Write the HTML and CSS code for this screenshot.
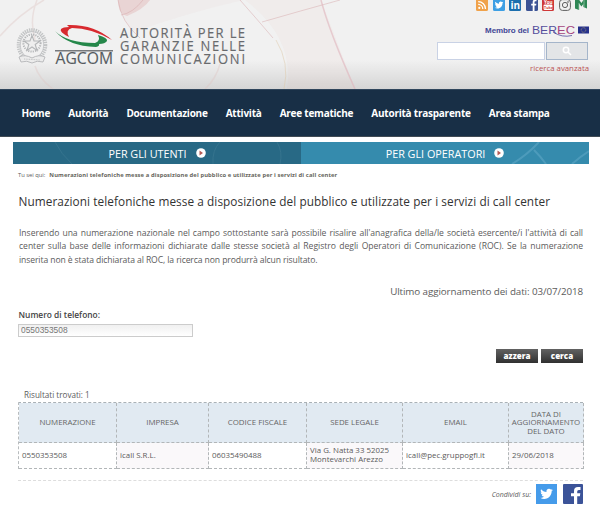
FILE: index.html
```html
<!DOCTYPE html>
<html lang="it">
<head>
<meta charset="utf-8">
<title>AGCOM - Numerazioni telefoniche</title>
<link rel="stylesheet" href="styles.css">
</head>
<body>
<header class="header">
  <svg class="swirls" width="600" height="89" viewBox="0 0 600 89" fill="none">
    <path d="M118 0Q121 22 134 32Q190 12 244 0Z" fill="#d79b9b" opacity=".05"/>
    <path d="M118 0Q118 14 127 16Q144 9 150 0Z" fill="#d88c8c" opacity=".25"/>
    <path d="M245 0Q295 38 287 89H355L321 0Z" fill="#e4b8a8" opacity=".08"/>
    <path d="M118 0Q121 22 140 38M143 0Q133 13 121 15M240 0Q256 18 273 38M262 22Q300 11 340 0" stroke="#d4a3a6" opacity=".45"/>
    <path d="M321 0Q329 31 355 89" stroke="#dfb4bc" stroke-width="1.5" opacity=".6"/>
    <path d="M276 40Q290 63 284 89" stroke="#dec8a8" opacity=".5"/>
    <path d="M37 0Q29 20 35 40M35 66Q39 79 53 89M220 64Q216 79 205 89M0 36Q19 14 44 0" stroke="#dfc5c4" stroke-width="1.5" opacity=".4"/>
  </svg>
  <svg class="logo" width="232" height="46" viewBox="15 22 232 46">
    <g fill="none" stroke="#b4b6b8">
      <ellipse cx="32" cy="45" rx="13.5" ry="15" stroke-width="3.6" stroke-dasharray="1.3 .9" stroke="#c2c4c5"/>
      <ellipse cx="32" cy="45" rx="11.8" ry="13.4" stroke-width=".6"/>
      <circle cx="32" cy="43" r="8.6" stroke-width="2" stroke-dasharray="1.2 1.1"/>
      <path d="M32 35.5L34 41H40L35.200 44.500L37 50.500L32 47L27 50.500L28.800 44.500L24 41H30Z" fill="#eee" stroke-width="1.1"/>
      <path d="M19 57Q25 54 32 58Q39 54 45 57L43 62Q37 60 32 63Q27 60 21 62Z" fill="#ececec" stroke-width=".9"/>
      <path d="M24 59L40 60" stroke-width=".8" stroke-dasharray="1 .7"/>
    </g>
    <path d="M67 25Q94 24 112 40Q91 28 72 28Q65 30 69 37Q59 32 61 29Q63 27 69 27Z" fill="#d82a2f"/>
    <path d="M55 31Q67 43 95 43Q101 41 98 35Q108 38 107 41Q105 44 99 44Q100 46 96 47Q68 46 55 31Z" fill="#25874a"/>
    <path d="M55 50.700H113" stroke="#77797c" stroke-width="1.600"/>
    <g class="logo-text">
      <text x="55.500" y="63.700" textLength="57.500" lengthAdjust="spacingAndGlyphs" class="agcom">AGCOM</text>
      <text transform="translate(120 37.700) scale(.94 1)" textLength="133">AUTORITÀ PER LE</text>
      <text transform="translate(120 50.700) scale(.94 1)" textLength="133">GARANZIE NELLE</text>
      <text transform="translate(120 63.900) scale(.94 1)" textLength="133">COMUNICAZIONI</text>
    </g>
  </svg>
  <div class="tools">
    <div class="social">
      <svg viewBox="0 0 12 12"><rect width="12" height="12" rx="1.500" fill="#f0a24b"/><circle cx="3.300" cy="8.900" r="1.100" fill="#fff"/><path d="M2.200 5.300A4.600 4.600 0 0 1 6.800 9.900M2.200 2.600A7.300 7.300 0 0 1 9.500 9.900" fill="none" stroke="#fff" stroke-width="1.300"/></svg>
      <svg viewBox="0 0 12 12"><rect width="12" height="12" rx="1.500" fill="#3d9fe4"/><path transform="translate(1.700 1.700) scale(.36)" fill="#fff" d="M23.953 4.570a10 10 0 01-2.825.775 4.958 4.958 0 002.163-2.723c-.951.555-2.005.959-3.127 1.184a4.920 4.920 0 00-8.384 4.482C7.690 8.095 4.067 6.130 1.640 3.162a4.822 4.822 0 00-.666 2.475c0 1.710.870 3.213 2.188 4.096a4.904 4.904 0 01-2.228-.616v.060a4.923 4.923 0 003.946 4.827 4.996 4.996 0 01-2.212.085 4.936 4.936 0 004.604 3.417 9.867 9.867 0 01-6.102 2.105c-.390 0-.779-.023-1.170-.067a13.995 13.995 0 007.557 2.209c9.053 0 13.998-7.496 13.998-13.985 0-.210 0-.420-.015-.630A9.935 9.935 0 0024 4.590z"/></svg>
      <svg viewBox="0 0 12 12"><rect width="12" height="12" rx="1.500" fill="#1c6fae"/><text x="1.500" y="10" class="in">in</text></svg>
      <svg viewBox="0 0 12 12"><rect width="12" height="12" rx="1.500" fill="#3b5294"/><path d="M10.500 2.200H9.400Q8.500 2.200 8.500 3.200V4.700H10.400L10.100 6.400H8.500V12H6.700V6.400H5.200V4.700H6.700V3Q6.700.6 9 .6H10.500Z" fill="#fff"/></svg>
      <svg viewBox="0 0 12 12"><rect width="12" height="12" rx="1.500" fill="#cf3838"/><text x="2" y="4.800" class="you">You</text><rect x="1.600" y="5.400" width="8.800" height="5.500" rx="1.200" fill="#fff"/><text x="2.100" y="9.900" class="tube">Tube</text></svg>
      <svg viewBox="0 0 12 12" fill="none" stroke="#606060"><rect x=".6" y=".6" width="10.800" height="10.800" rx="2.800"/><circle cx="6" cy="6" r="2.600"/><circle cx="9" cy="3" r=".4"/></svg>
      <svg viewBox="0 0 12 12"><path d="M0 1L3.500 0L6.500 4L9 0L12 1V9.500L8.300 8V5L6.500 7.500L4 4.500V11L0 9.500Z" fill="#2f8755"/><path d="M4 4V11M9 1V8" stroke="#9fcab0" stroke-width=".7"/></svg>
    </div>
    <div class="member"><span class="member-label">Membro del</span>
      <svg width="58" height="12" viewBox="0 0 58 12"><g class="berec"><text x="1" y="9" textLength="25" lengthAdjust="spacingAndGlyphs" fill="#554f9d">BER</text><text x="26" y="9" textLength="18" lengthAdjust="spacingAndGlyphs" fill="#a54480">EC</text></g><path d="M22 7Q31 13 41 10.500" fill="none" stroke="#554f9d" stroke-width=".8"/><rect x="47" y="1.500" width="11" height="7" fill="#26318c"/><circle cx="52.500" cy="5" r="2.300" fill="none" stroke="#b5aa68" stroke-width=".8" stroke-dasharray=".7 .6"/></svg>
    </div>
    <form class="search"><input type="text" aria-label="Ricerca"><button type="button" aria-label="Cerca"><svg width="10" height="10" viewBox="0 0 10 10" fill="none" stroke="#fff" stroke-width="1.500"><circle cx="4" cy="4" r="2.700"/><path d="M6 6L9 9"/></svg></button></form>
    <a class="advanced">ricerca avanzata</a>
  </div>
</header>
<nav class="nav"><a>Home</a><a>Autorità</a><a>Documentazione</a><a>Attività</a><a>Aree tematiche</a><a>Autorità trasparente</a><a>Area stampa</a></nav>
<div class="sections">
  <a class="users"><svg class="arcs" width="288" height="22" fill="none" stroke="#5e94a9" opacity=".25"><path d="M42 0Q48 12 59 22M200 22Q199 8 207 0M264 0Q270 10 267 22"/></svg><span>PER GLI UTENTI</span><svg class="go" viewBox="0 0 10 10"><circle cx="5" cy="5" r="4.800" fill="#fff"/><path d="M3.500 2.500L7 5L3.500 7.500Z" fill="#b75b55"/></svg></a>
  <a class="operators"><svg class="arcs" width="288" height="22" fill="none" stroke="#72b4d1" stroke-width="2" opacity=".4"><path d="M211 22Q226 13 238 0M271 22Q280 14 288 9M233 8Q240 15 245 22"/></svg><span>PER GLI OPERATORI</span><svg class="go" viewBox="0 0 10 10"><circle cx="5" cy="5" r="4.800" fill="#fff"/><path d="M3.500 2.500L7 5L3.500 7.500Z" fill="#b75b55"/></svg></a>
</div>
<main class="content">
  <div class="crumbs"><span class="here">Tu sei qui:</span><b>Numerazioni telefoniche messe a disposizione del pubblico e utilizzate per i servizi di call center</b></div>
  <h1>Numerazioni telefoniche messe a disposizione del pubblico e utilizzate per i servizi di call center</h1>
  <p class="intro"><span class="full">Inserendo una numerazione nazionale nel campo sottostante sarà possibile risalire all'anagrafica della/le società esercente/i l'attività di call</span> <span class="full">center sulla base delle informazioni dichiarate dalle stesse società al Registro degli Operatori di Comunicazione (ROC). Se la numerazione</span> <span class="last">inserita non è stata dichiarata al ROC, la ricerca non produrrà alcun risultato.</span></p>
  <p class="updated">Ultimo aggiornamento dei dati: 03/07/2018</p>
  <label class="phone-label" for="phone">Numero di telefono:</label>
  <input class="phone" id="phone" value="0550353508">
  <div class="actions"><button type="button">azzera</button><button type="button">cerca</button></div>
  <div class="found">Risultati trovati: 1</div>
  <div class="results">
    <div class="th">NUMERAZIONE</div><div class="th">IMPRESA</div><div class="th">CODICE FISCALE</div><div class="th">SEDE LEGALE</div><div class="th">EMAIL</div><div class="th">DATA DI<br>AGGIORNAMENTO<br>DEL DATO</div>
    <div class="td">0550353508</div><div class="td alt">icall S.R.L.</div><div class="td">06035490488</div><div class="td alt">Via G. Natta 33 52025<br>Montevarchi Arezzo</div><div class="td">icall@pec.gruppogfi.it</div><div class="td alt">29/06/2018</div>
  </div>
  <div class="share"><span>Condividi su:</span>
    <svg width="21" height="20" viewBox="0 0 21 20"><rect width="21" height="20" fill="#459bea"/><path transform="translate(4.200 3.500) scale(.53)" fill="#fff" d="M23.953 4.570a10 10 0 01-2.825.775 4.958 4.958 0 002.163-2.723c-.951.555-2.005.959-3.127 1.184a4.920 4.920 0 00-8.384 4.482C7.690 8.095 4.067 6.130 1.640 3.162a4.822 4.822 0 00-.666 2.475c0 1.710.870 3.213 2.188 4.096a4.904 4.904 0 01-2.228-.616v.060a4.923 4.923 0 003.946 4.827 4.996 4.996 0 01-2.212.085 4.936 4.936 0 004.604 3.417 9.867 9.867 0 01-6.102 2.105c-.390 0-.779-.023-1.170-.067a13.995 13.995 0 007.557 2.209c9.053 0 13.998-7.496 13.998-13.985 0-.210 0-.420-.015-.630A9.935 9.935 0 0024 4.590z"/></svg>
    <svg width="20" height="20" viewBox="0 0 20 20"><rect width="20" height="20" rx="1" fill="#3b5398"/><path d="M17.500 6H15.700Q14.200 6 14.200 7.500V9.300H17.300L16.900 12.300H14.200V20H11V12.300H8V9.300H11V7Q11 3 15 3H17.500Z" fill="#fff"/></svg>
  </div>
</main>
</body>
</html>
```
FILE: styles.css
```css
* { box-sizing: border-box; }
body { margin: 0; width: 600px; height: 516px; overflow: hidden; background: #fff; color: #5b5b5b; font-family: "Open Sans", "Noto Sans", sans-serif; }
h1, p { margin: 0; font-weight: 400; }
.header { position: relative; display: flex; justify-content: space-between; height: 89px; background: linear-gradient(#f1f1f1 0, #f1f1f1 60px, #d5d5d5 89px); }
.swirls { position: absolute; top: 0; left: 0; }
.logo { position: relative; margin: 22px 0 0 15px; }
.logo-text { font: 13.800px "Open Sans", sans-serif; fill: #686a6d; stroke: #686a6d; stroke-width: .15px; }
.agcom { font-size: 15.500px; fill: #555b60; }
.tools { position: relative; width: 163px; padding-right: 11px; }
.social { display: flex; gap: 4.500px; width: 111px; margin: -1px 0 0 39px; }
.social svg { width: 12px; height: 12px; flex: none; }
.in { font: bold 10px "Open Sans", sans-serif; fill: #fff; }
.you { font: bold 4.500px "Open Sans", sans-serif; fill: #fff; }
.tube { font: bold 3.600px "Open Sans", sans-serif; fill: #cf3838; }
.member { display: flex; align-items: center; justify-content: flex-end; gap: 2px; height: 12px; margin-top: 14px; }
.member-label { color: #434796; font: bold 8px/12px "Liberation Sans", Arial, sans-serif; letter-spacing: -.1px; }
.berec { font: 11px "Liberation Sans", Arial, sans-serif; }
.search { display: flex; gap: 1px; height: 18px; margin-top: 5px; }
.search input { width: 108px; height: 18px; padding: 0; border: 1px solid #c9d2e5; background: #fff; }
.search button { width: 42px; height: 18px; padding: 0; border: 1px solid #a4b5ca; background: #e3e5e7; line-height: 0; }
.advanced { display: block; margin-top: 1px; color: #bb5455; font-size: 7.800px; line-height: 14px; text-align: right; }
.nav { display: flex; align-items: center; gap: 18.100px; height: 48px; padding-left: 21.500px; border-top: 1px solid #30465c; border-bottom: 1px solid #414b54; background: #182f46; color: #fff; font-size: 10px; font-weight: 700; letter-spacing: -.24px; white-space: nowrap; }
.sections { display: grid; grid-template-columns: 288px 288px; height: 22px; margin: 5px 0 0 13px; }
.sections a { position: relative; display: flex; align-items: center; justify-content: center; gap: 9px; color: #fff; font-size: 10.800px; }
.users { background: #286985; }
.operators { background: #358bad; }
.arcs { position: absolute; left: 0; top: 0; }
.sections span { position: relative; }
.go { position: relative; width: 10px; height: 10px; }
.content { padding: 0 17px 0 18px; }
.crumbs { display: flex; gap: 4px; height: 22px; font-size: 5.800px; line-height: 22px; white-space: nowrap; }
.crumbs b { color: #65655c; letter-spacing: .11px; }
h1 { height: 30px; padding-left: .5px; color: #333; font-size: 11.800px; letter-spacing: .07px; line-height: 30px; white-space: nowrap; }
.intro { margin-top: 11px; padding-left: 1px; font-size: 8.600px; letter-spacing: -.03px; line-height: 13.300px; }
.intro span { display: block; white-space: nowrap; }
.intro .full { text-align: justify; text-align-last: justify; white-space: normal; }
.intro .last { letter-spacing: -.1px; }
.updated { margin-top: 17px; font-size: 9.800px; letter-spacing: -.09px; line-height: 16px; text-align: right; }
.phone-label { display: block; margin-top: 7px; padding-left: .5px; color: #444; font-size: 8.400px; font-weight: 600; line-height: 16px; }
.phone { display: block; width: 175px; height: 13px; margin-top: 1px; padding: 0 2px; border: 1px solid #ccc; background: linear-gradient(#f0f0f0, #fff); color: #777; font: 8.400px "Liberation Sans", Arial, sans-serif; }
.actions { display: flex; justify-content: flex-end; gap: 3px; margin-top: 12px; }
.actions button { width: 42px; height: 14px; padding: 0; border: 0; background: linear-gradient(#626262, #303030); color: #fff; font: 800 8px/12px "Open Sans", sans-serif; }
.found { height: 39px; padding: 25px 0 0 6px; font-size: 8.100px; line-height: 14px; }
.results { display: grid; grid-template-columns: 98px 92px 98px 96px 106px 75px; grid-template-rows: 40px 26px; border-left: 1px dashed #b8bcbe; border-top: 1px dashed #a9b1b6; }
.th, .td { display: flex; align-items: center; border-right: 1px dashed #b2b6b8; border-bottom: 1px dashed #b2b6b8; white-space: nowrap; }
.th { justify-content: center; background: #e1eaf2; color: #666; font-size: 7.900px; line-height: 8.500px; text-align: center; }
.td { padding-left: 3px; font-size: 7.900px; line-height: 9.500px; }
.alt { background: #faf8fa; }
.share { display: flex; align-items: center; justify-content: flex-end; height: 25px; margin-top: 11px; padding-top: 3px; border-top: 1px dashed #ddd; font-size: 7px; font-style: italic; }
.share svg { margin-left: 5px; }
.share svg + svg { margin-left: 6px; }
```
